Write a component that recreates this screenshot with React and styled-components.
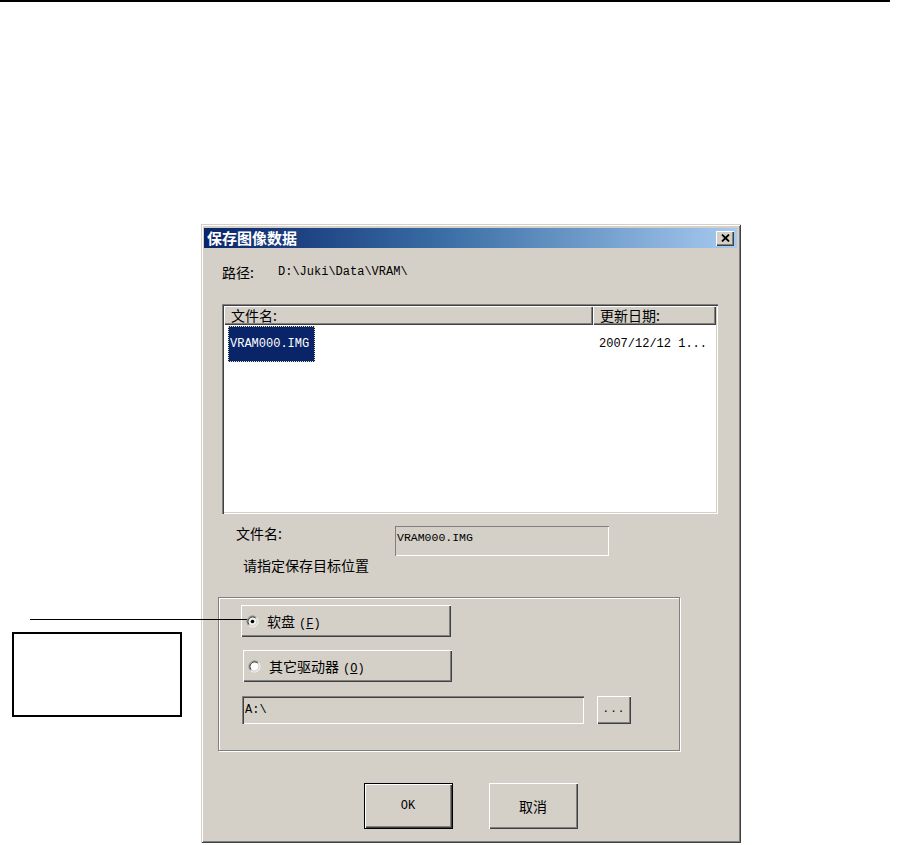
import React from "react";
import styled, { createGlobalStyle } from "styled-components";

const CJK = `"Noto Sans CJK SC", "Noto Sans", sans-serif`;
const MONO = `"Liberation Mono", "DejaVu Sans Mono", monospace`;

const Global = createGlobalStyle`
  html, body { margin: 0; padding: 0; background: #fff; }
  body { font-family: ${CJK}; color: #000; }
  * { box-sizing: border-box; }
`;

const raised = `box-shadow: inset 1px 1px 0 #fff, inset -1px -1px 0 #404040, inset -2px -2px 0 #808080;`;

const Page = styled.div`
  position: relative;
  width: 902px;
  height: 845px;
  overflow: hidden;
  background: #fff;
`;

const TopRule = styled.div`
  width: 890px;
  height: 2px;
  background: #000;
`;

const Stage = styled.div`
  display: flex;
  padding-top: 222px;
`;

const NoteColumn = styled.div`
  flex: none;
  width: 201px;
  padding: 408px 0 0 12px;
`;

const NoteBox = styled.div`
  width: 170px;
  height: 85px;
  border: 2px solid #000;
  background: #fff;
`;

const LeaderLine = styled.div`
  position: absolute;
  left: 30px;
  top: 619px;
  width: 217px;
  height: 1px;
  background: #000;
`;

const Dialog = styled.div`
  flex: none;
  width: 540px;
  height: 619px;
  background: #d4d0c8;
  padding: 4px 4px 3px 3px;
  box-shadow: inset 1px 1px 0 #d4d0c8, inset -1px -1px 0 #404040,
    inset 2px 2px 0 #fff, inset -2px -2px 0 #808080;
  display: flex;
  flex-direction: column;
`;

const TitleBar = styled.div`
  height: 20px;
  display: flex;
  align-items: center;
  justify-content: space-between;
  padding: 0 3px 0 3px;
  background: linear-gradient(90deg, #0a246a 0%, #3a6ea5 45%, #a6caf0 100%);
`;

const TitleText = styled.span`
  color: #fff;
  font-family: ${CJK};
  font-weight: 700;
  font-size: 15px;
  line-height: 20px;
`;

const CloseButton = styled.div`
  width: 18px;
  height: 15px;
  background: #d4d0c8;
  ${raised}
  display: flex;
  align-items: center;
  justify-content: center;
  padding-bottom: 1px;
`;

const Body = styled.div`
  display: flex;
  flex-direction: column;
  align-items: flex-start;
  padding-left: 18px;
`;

const PathRow = styled.div`
  margin-top: 14px;
  height: 20px;
  display: flex;
  align-items: center;
`;

const PathLabel = styled.span`
  width: 56px;
  font-size: 14px;
  line-height: 20px;
`;

const Mono = styled.span`
  font-family: ${MONO};
  font-size: ${(p) => p.$size || 12}px;
  color: ${(p) => p.$color || "#000"};
  white-space: pre;
`;

const ListView = styled.div`
  margin-top: 22px;
  width: 496px;
  height: 210px;
  background: #fff;
  padding: 2px;
  box-shadow: inset 1px 1px 0 #808080, inset 2px 2px 0 #404040,
    inset -1px -1px 0 #fff, inset -2px -2px 0 #d4d0c8;
`;

const HeaderRow = styled.div`
  display: flex;
  height: 19px;
`;

const HeaderCell = styled.div`
  width: ${(p) => p.$w}px;
  background: #d4d0c8;
  ${raised}
  font-size: 14px;
  line-height: 19px;
  padding-left: 7px;
`;

const ListRow = styled.div`
  display: flex;
  margin-top: 1px;
`;

const NameCell = styled.div`
  width: 369px;
  padding-left: 4px;
`;

const SelectedItem = styled.div`
  width: 87px;
  height: 36px;
  display: flex;
  align-items: center;
  padding-left: 2px;
  background: #0a246a;
  outline: 1px dotted #e8e0a0;
  outline-offset: -1px;
`;

const DateCell = styled.div`
  padding-left: 6px;
  height: 36px;
  display: flex;
  align-items: center;
`;

const FileRow = styled.div`
  margin-top: 12px;
  display: flex;
  align-items: flex-start;
`;

const FileLabel = styled.div`
  width: 173px;
  padding-left: 14px;
  font-size: 14px;
  line-height: 14px;
`;

const ReadonlyField = styled.div`
  width: 214px;
  height: 30px;
  padding: 1px 2px;
  line-height: 14px;
  box-shadow: inset 1px 1px 0 #808080, inset -1px -1px 0 #fff;
`;

const Hint = styled.div`
  margin-top: 1px;
  padding-left: 21px;
  font-size: 14px;
  line-height: 16px;
`;

const GroupBox = styled.div`
  margin-top: 24px;
  margin-left: -4px;
  width: 462px;
  height: 154px;
  border: 1px solid #808080;
  box-shadow: inset 1px 1px 0 #fff, 1px 1px 0 #fff;
  padding: 7px 0 0 22px;
  display: flex;
  flex-direction: column;
  align-items: flex-start;
`;

const ToggleButton = styled.div`
  width: ${(p) => p.$w}px;
  height: 32px;
  margin-top: ${(p) => p.$top || 0}px;
  margin-left: ${(p) => p.$left || 0}px;
  background: #d4d0c8;
  ${raised}
  display: flex;
  align-items: center;
  gap: 8px;
  padding-left: 5px;
  font-size: 14px;
`;

const Accel = styled.span`
  font-family: ${MONO};
  font-size: 12px;
  margin-left: 4px;
`;

const FieldRow = styled.div`
  margin-top: 14px;
  margin-left: 1px;
  display: flex;
  gap: 13px;
`;

const PathField = styled.div`
  width: 342px;
  height: 28px;
  padding: 2px 3px;
  line-height: 16px;
  box-shadow: inset 1px 1px 0 #808080, inset 2px 2px 0 #404040,
    inset -1px -1px 0 #fff, inset -2px -2px 0 #d4d0c8;
`;

const BrowseButton = styled.div`
  width: 34px;
  height: 28px;
  ${raised}
  display: flex;
  align-items: center;
  justify-content: center;
  font-family: ${MONO};
  font-size: 11px;
  letter-spacing: 1px;
  padding-bottom: 3px;
`;

const Actions = styled.div`
  margin-top: 32px;
  display: flex;
  justify-content: center;
  gap: 36px;
`;

const PushButton = styled.div`
  width: 89px;
  height: 46px;
  background: #d4d0c8;
  display: flex;
  align-items: center;
  justify-content: center;
  font-size: 14px;
  ${(p) =>
    p.$default
      ? `box-shadow: inset 0 0 0 1px #000, inset 2px 2px 0 #fff, inset -2px -2px 0 #404040, inset -3px -3px 0 #808080;`
      : raised}
`;

function Radio({ checked }) {
  return (
    <svg width="13" height="13" viewBox="0 0 13 13">
      <circle cx="6.5" cy="6.5" r="4.2" fill={checked ? "#eeeeea" : "#fff"} />
      <path d="M2.61 10.39 A5.5 5.5 0 0 1 10.39 2.61" stroke="#808080" fill="none" />
      <path d="M10.39 2.61 A5.5 5.5 0 0 1 2.61 10.39" stroke="#fff" fill="none" />
      <path d="M3.32 9.68 A4.5 4.5 0 0 1 9.68 3.32" stroke="#404040" fill="none" />
      <path d="M9.68 3.32 A4.5 4.5 0 0 1 3.32 9.68" stroke="#d4d0c8" fill="none" />
      {checked && <circle cx="6.5" cy="6.5" r="1.8" fill="#000" />}
    </svg>
  );
}

function CloseGlyph() {
  return (
    <svg width="9" height="8" viewBox="0 0 9 8">
      <path d="M1 0.5 L8 7.5 M8 0.5 L1 7.5" stroke="#000" strokeWidth="1.8" />
    </svg>
  );
}

export default function App() {
  return (
    <Page>
      <Global />
      <TopRule />
      <Stage>
        <NoteColumn>
          <NoteBox />
        </NoteColumn>
        <Dialog>
          <TitleBar>
            <TitleText>保存图像数据</TitleText>
            <CloseButton>
              <CloseGlyph />
            </CloseButton>
          </TitleBar>
          <Body>
            <PathRow>
              <PathLabel>路径:</PathLabel>
              <Mono>D:\Juki\Data\VRAM\</Mono>
            </PathRow>
            <ListView>
              <HeaderRow>
                <HeaderCell $w={369}>文件名:</HeaderCell>
                <HeaderCell $w={123}>更新日期:</HeaderCell>
              </HeaderRow>
              <ListRow>
                <NameCell>
                  <SelectedItem>
                    <Mono $color="#fff">VRAM000.IMG</Mono>
                  </SelectedItem>
                </NameCell>
                <DateCell>
                  <Mono>2007/12/12 1...</Mono>
                </DateCell>
              </ListRow>
            </ListView>
            <FileRow>
              <FileLabel>文件名:</FileLabel>
              <ReadonlyField>
                <Mono $size={11.5}>VRAM000.IMG</Mono>
              </ReadonlyField>
            </FileRow>
            <Hint>请指定保存目标位置</Hint>
            <GroupBox>
              <ToggleButton $w={210}>
                <Radio checked />
                <span>
                  软盘<Accel>(<u>F</u>)</Accel>
                </span>
              </ToggleButton>
              <ToggleButton $w={209} $top={13} $left={2}>
                <Radio />
                <span>
                  其它驱动器<Accel>(<u>O</u>)</Accel>
                </span>
              </ToggleButton>
              <FieldRow>
                <PathField>
                  <Mono>A:\</Mono>
                </PathField>
                <BrowseButton>...</BrowseButton>
              </FieldRow>
            </GroupBox>
          </Body>
          <Actions>
            <PushButton $default>
              <Mono>OK</Mono>
            </PushButton>
            <PushButton>取消</PushButton>
          </Actions>
        </Dialog>
      </Stage>
      <LeaderLine />
    </Page>
  );
}
